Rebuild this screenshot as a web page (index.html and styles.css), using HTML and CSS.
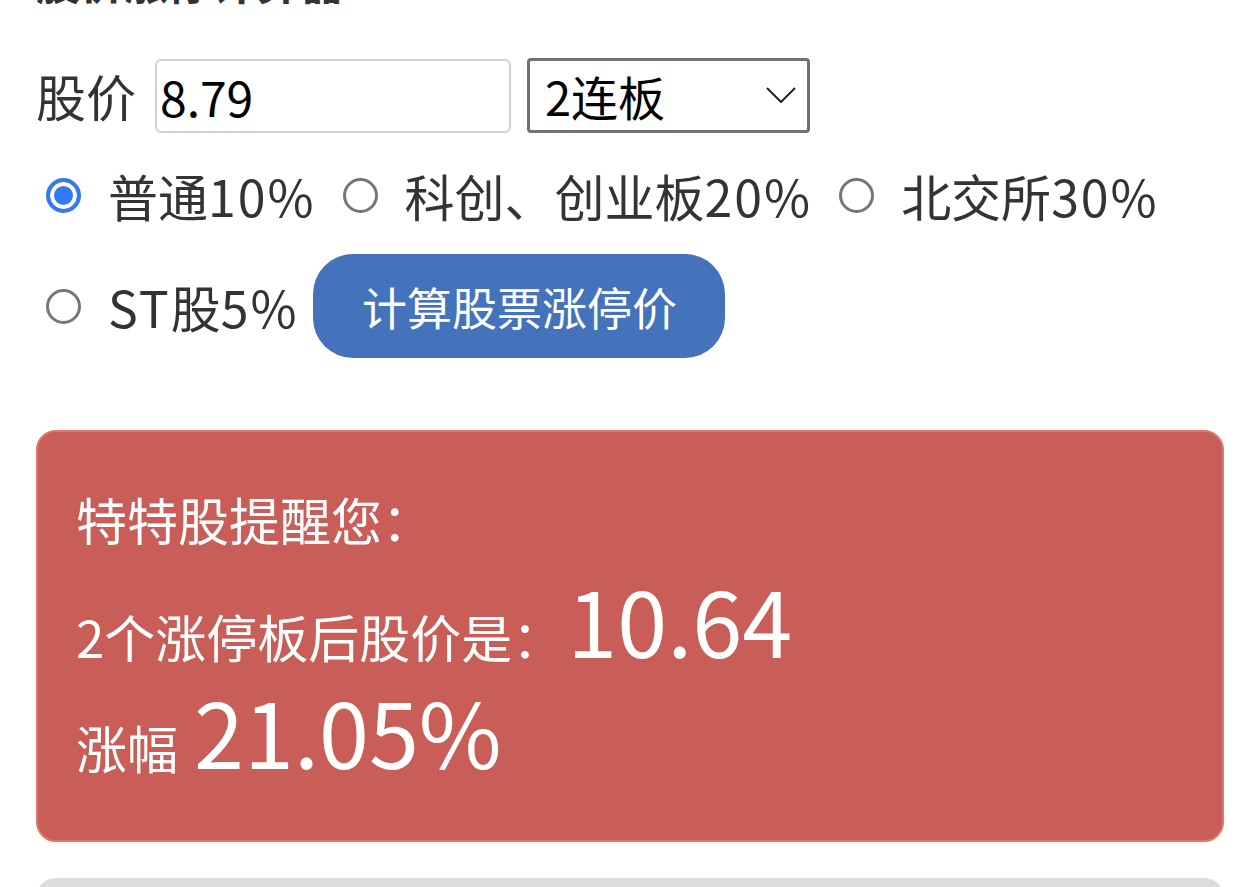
FILE: index.html
```html
<!DOCTYPE html>
<html lang="zh-CN">
<head>
<meta charset="utf-8">
<title>股价涨停计算器</title>
<link rel="stylesheet" href="styles.css">
</head>
<body>
<div class="page">
  <h2 class="title">股价涨停计算器</h2>
  <div class="form-row">
    <span class="label">股价</span>
    <input class="price" type="text" value="8.79">
    <div class="select-wrap">
      <select class="boards">
        <option>1连板</option>
        <option selected>2连板</option>
        <option>3连板</option>
      </select>
      <svg class="chev" width="30" height="16" viewBox="0 0 30 16"><path d="M1 1 L15 15 L29 1" fill="none" stroke="#222" stroke-width="2"/></svg>
    </div>
  </div>
  <div class="options">
    <label class="opt"><input type="radio" name="t" checked><span>普通<span class="num">10%</span></span></label>
    <label class="opt"><input type="radio" name="t"><span>科创、创业板<span class="num">20%</span></span></label>
    <label class="opt"><input type="radio" name="t"><span>北交所<span class="num">30%</span></span></label>
    <label class="opt opt-st"><input type="radio" name="t"><span><span class="num">ST</span>股<span class="num">5%</span></span></label>
    <button class="calc" type="button">计算股票涨停价</button>
  </div>
  <div class="result">
    <div class="line1">特特股提醒您：</div>
    <div class="line2"><span>2个涨停板后股价是：</span><span class="big">10.64</span></div>
    <div class="line3"><span>涨幅</span><span class="big">21.05%</span></div>
  </div>
  <div class="next"></div>
</div>
</body>
</html>
```
FILE: styles.css
```css
html, body {
  margin: 0;
  padding: 0;
  background: #fff;
}
body {
  font-family: "Noto Sans CJK SC", "Noto Sans", sans-serif;
  color: #333;
  overflow: hidden;
}
.page {
  padding: 0 36px;
}
.title {
  margin: -52px 0 0;
  font-size: 44px;
  line-height: 66px;
  font-weight: bold;
  color: #333;
}
.form-row {
  display: flex;
  align-items: center;
  margin-top: 44px;
  height: 75px;
}
.label {
  font-size: 50px;
  line-height: 75px;
  color: #333;
}
.price {
  box-sizing: border-box;
  width: 356px;
  height: 74px;
  margin-left: 19px;
  border: 2px solid #cfcfcf;
  border-radius: 6px;
  padding: 0 3px;
  font-family: inherit;
  font-size: 48px;
  color: #000;
  outline: none;
}
.select-wrap {
  position: relative;
  margin-left: 16px;
}
.boards {
  appearance: none;
  -webkit-appearance: none;
  box-sizing: border-box;
  width: 283px;
  height: 75px;
  border: 3px solid #717171;
  border-radius: 4px;
  background: #fff;
  padding: 0 0 0 15px;
  font-family: inherit;
  font-size: 47px;
  color: #000;
  outline: none;
}
.chev {
  position: absolute;
  left: 239px;
  top: 29px;
  pointer-events: none;
}
.options {
  display: flex;
  flex-wrap: wrap;
  align-items: center;
  row-gap: 23px;
  margin-top: 26px;
  padding-left: 10px;
}
.opt {
  display: flex;
  align-items: center;
  height: 72px;
  font-size: 50px;
  color: #333;
  margin-right: 27px;
}
.num {
  letter-spacing: 2px;
}
.opt input {
  appearance: none;
  -webkit-appearance: none;
  box-sizing: border-box;
  width: 35px;
  height: 35px;
  margin: 0 27px 0 0;
  border-radius: 50%;
  border: 3px solid #767676;
  background: #fff;
}
.opt input:checked {
  border: 4px solid #3478f6;
  background: #3478f6;
  box-shadow: inset 0 0 0 4px #fff;
}
.opt-st {
  margin-right: 15px;
}
.calc {
  width: 412px;
  height: 104px;
  border: none;
  border-radius: 40px;
  background: #4472bb;
  color: #fff;
  font-family: inherit;
  font-size: 45px;
  padding: 0;
}
.result {
  box-sizing: border-box;
  margin-top: 72px;
  height: 412px;
  background: #c85e57;
  border: 2px solid #e0766a;
  border-radius: 20px;
  padding: 53px 38px 0;
  color: #fff;
  font-size: 51px;
}
.line1 {
  line-height: 68px;
}
.line2, .line3 {
  display: flex;
  align-items: baseline;
  line-height: 60px;
}
.line2 {
  margin-top: 16px;
}
.line3 {
  margin-top: 11px;
}
.big {
  font-size: 90px;
  line-height: 100px;
}
.line2 .big {
  margin-left: 4px;
}
.line3 .big {
  margin-left: 16px;
}
.next {
  margin-top: 36px;
  height: 60px;
  background: #dcdcdc;
  border-radius: 20px;
}
```
